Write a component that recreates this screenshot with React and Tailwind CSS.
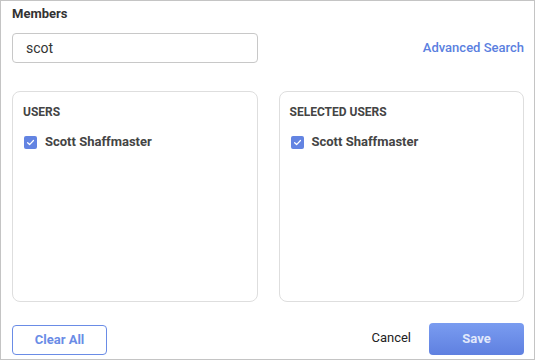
import React from "react";

function Check() {
  return (
    <span className="flex h-[13px] w-[13px] items-center justify-center rounded-[2px] bg-[#6384e2]">
      <svg width="9" height="9" viewBox="0 0 10 10" fill="none">
        <path d="M1.8 5.2 L4 7.3 L8.3 2.8" stroke="white" strokeWidth="1.4" strokeLinecap="round" strokeLinejoin="round" />
      </svg>
    </span>
  );
}

function Panel({ title }) {
  return (
    <div className="h-[211px] rounded-[8px] border border-[#dedede] px-[10px] pt-[12px]">
      <div className="text-[12px] font-bold leading-[16px] text-[#444]">{title}</div>
      <div className="mt-[14px] flex items-center gap-[8px] pl-[1px]">
        <Check />
        <span className="text-[13px] font-bold leading-[16px] text-[#444]">Scott Shaffmaster</span>
      </div>
    </div>
  );
}

export default function App() {
  return (
    <div className="bg-white" style={{ fontFamily: "Roboto, 'Liberation Sans', sans-serif" }}>
      <div className="flex h-[360px] w-[535px] flex-col border border-[#c4c4c4] pl-[11px] pr-[10px]">
        <div className="mt-[5px] text-[13px] font-bold leading-[16px] text-[#333]">Members</div>
        <div className="mt-[11px] flex items-center justify-between">
          <div className="flex h-[30px] w-[246px] items-center rounded-[4px] border border-[#c8c8c8] px-[13px] text-[14px] text-[#333]">
            scot
          </div>
          <a className="text-[13px] font-medium text-[#5a80e0]">Advanced Search</a>
        </div>
        <div className="mt-[28px] grid grid-cols-2 gap-[21px]">
          <Panel title="USERS" />
          <Panel title="SELECTED USERS" />
        </div>
        <div className="mt-[21px] flex items-end justify-between">
          <button className="h-[30px] w-[95px] rounded-[4px] border border-[#6a8ce6] text-[13px] font-bold text-[#6a8ce6]">
            Clear All
          </button>
          <div className="flex items-end">
            <button className="mb-[8px] mr-[18px] text-[13px] font-normal text-[#222]">Cancel</button>
            <button className="h-[32px] w-[95px] rounded-[4px] bg-gradient-to-b from-[#7a9cf0] to-[#5f80e0] text-[13px] font-bold text-[#e2e9fb]">
              Save
            </button>
          </div>
        </div>
      </div>
    </div>
  );
}
